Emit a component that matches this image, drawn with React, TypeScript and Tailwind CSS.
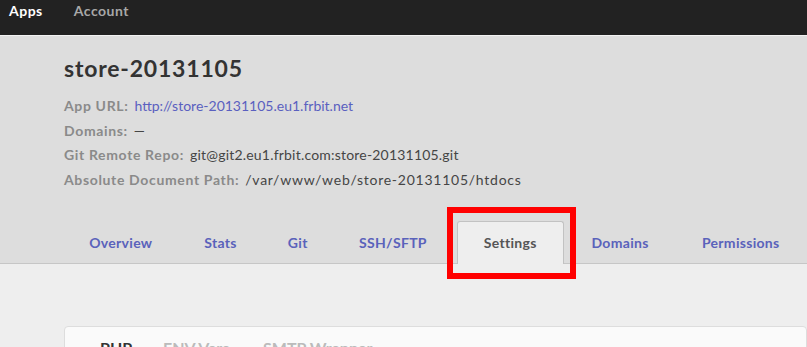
import React from 'react';

const FONT = { fontFamily: 'Lato, "Open Sans", "DejaVu Sans", sans-serif' };

const DETAILS: { label: string; value: string; cls: string }[] = [
  { label: 'App URL:', value: 'http://store-20131105.eu1.frbit.net', cls: 'text-[#5a60c0]' },
  { label: 'Domains:', value: '—', cls: 'text-[#454545]' },
  { label: 'Git Remote Repo:', value: 'git@git2.eu1.frbit.com:store-20131105.git', cls: 'text-[#454545] tracking-[0.2px]' },
  { label: 'Absolute Document Path:', value: '/var/www/web/store-20131105/htdocs', cls: 'text-[#454545] tracking-[0.75px]' },
];

const TABS: { name: string; w: string }[] = [
  { name: 'Overview', w: 'w-[114px]' },
  { name: 'Stats', w: 'w-[86px]' },
  { name: 'Git', w: 'w-[69px]' },
  { name: 'SSH/SFTP', w: 'w-[122px]' },
  { name: 'Settings', w: 'w-[107px]' },
  { name: 'Domains', w: 'w-[109px]' },
  { name: 'Permissions', w: 'w-[133px]' },
];

export default function App() {
  return (
    <div className="w-[807px] h-[347px] overflow-hidden bg-[#eeeeee]" style={FONT}>
      <nav className="h-[33px] bg-[#222222] flex items-start gap-[31px] px-[9px] pt-[2px] text-[14px] leading-[18px] font-bold tracking-[0.5px] border-b border-[#f2f2f2] box-content">
        <span className="text-white">Apps</span>
        <span className="text-[#a8a8a8]">Account</span>
      </nav>

      <header className="bg-[#dddddd] border-b border-[#c6c6c6] pt-[18px]">
        <div className="pl-[64px]">
          <h1 className="text-[23px] leading-[28px] font-bold tracking-[0.8px] text-[#333333]">store-20131105</h1>
          <dl className="mt-[12px] flex flex-col text-[14px] leading-[24.5px]">
            {DETAILS.map((d) => (
              <div key={d.label} className="flex gap-[6px]">
                <dt className="font-bold text-[#8a8a8a] tracking-[0.65px]">{d.label}</dt>
                <dd className={d.cls}>{d.value}</dd>
              </div>
            ))}
          </dl>
        </div>

        <ul className="mt-[28px] flex items-end pl-[64px] h-[44px] -mb-px">
          {TABS.map((t) =>
            t.name === 'Settings' ? (
              <li key={t.name} className="relative ml-[3px] mr-[2px]">
                <div className="h-[43px] w-[107px] bg-[#eeeeee] border border-b-0 border-[#c2c2c2] rounded-t-[3px] flex items-center justify-center text-[14px] font-bold tracking-[0.3px] text-[#555555] pb-[1px]">
                  {t.name}
                </div>
                <div className="absolute left-[-10px] top-[-14px] w-[129px] h-[72px] border-[6px] border-[#ff0000]" />
              </li>
            ) : (
              <li
                key={t.name}
                className={`${t.w} h-[43px] flex items-center justify-center text-[14px] font-bold tracking-[0.3px] text-[#5a62bb] pb-[1px]`}
              >
                {t.name}
              </li>
            )
          )}
        </ul>
      </header>

      <section className="mt-[62px] ml-[64px] bg-[#fafafa] border border-[#dddddd] rounded-[4px] h-[60px]">
        <div className="flex pl-[35px] pt-[11px] text-[16px] leading-[20px] font-bold">
          <span className="text-[#333333] w-[63px]">PHP</span>
          <span className="text-[#bbbbbb] w-[100px]">ENV Vars</span>
          <span className="text-[#bbbbbb]">SMTP Wrapper</span>
        </div>
      </section>
    </div>
  );
}
